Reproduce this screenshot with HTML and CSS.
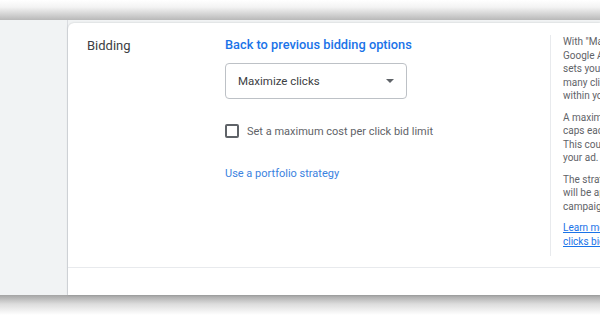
FILE: index.html
```html
<!DOCTYPE html>
<html lang="en">
<head>
    <meta charset="UTF-8">
    <title>Bidding</title>
    <link rel="stylesheet" href="styles.css">
</head>
<body>
    <div class="shade-top"></div>

    <div class="frame">
        <aside class="side"></aside>

        <main class="main">
            <div class="card">
                <section class="bidding">
                    <h2 class="label">Bidding</h2>

                    <div class="options">
                        <a href="#" class="back-link">Back to previous bidding options</a>

                        <div class="select">
                            <span>Maximize clicks</span>
                            <span class="caret"></span>
                        </div>

                        <label class="check">
                            <span class="box"></span>
                            Set a maximum cost per click bid limit
                        </label>

                        <a href="#" class="link">Use a portfolio strategy</a>
                    </div>

                    <div class="help">
                        <p>With "Maximize clicks,"<br>Google Ads automatically<br>sets your bids to get as<br>many clicks as possible<br>within your budget.</p>
                        <p>A maximum bid limit<br>caps each bid's cost.<br>This could limit clicks on<br>your ad.</p>
                        <p>The strategy you select<br>will be applied to this<br>campaign.</p>
                        <p><a href="#">Learn more about Maximize<br>clicks bidding</a></p>
                    </div>
                </section>
            </div>
        </main>
    </div>

    <div class="shade-bottom"></div>
</body>
</html>
```

FILE: styles.css
```css
* {
    margin: 0;
    padding: 0;
    box-sizing: border-box;
}

body {
    background: #fff;
    font-family: Roboto, "Liberation Sans", sans-serif;
    color: #3c4043;
    overflow: hidden;
}

a {
    text-decoration: none;
    color: #1a73e8;
}

.shade-top {
    height: 20px;
    background: linear-gradient(#fff 0%, #f4f4f4 35%, #b9b9b9 100%);
}

.shade-bottom {
    height: 20px;
    background: linear-gradient(#a4a4a4 0%, #dcdcdc 45%, #fff 100%);
}

.frame {
    display: flex;
    height: 275px;
    background: #f1f3f4;
}

.side {
    flex: 0 0 68px;
    border-right: 1px solid #dadce0;
}

.main {
    flex: 1;
    min-width: 0;
    padding-top: 3px;
    display: flex;
}

.card {
    flex: 1;
    min-width: 0;
    background: #fff;
    border-radius: 6px 0 0 0;
    box-shadow: 0 0 2px rgba(60, 64, 67, 0.25);
    display: flex;
    flex-direction: column;
}

.bidding {
    display: flex;
    height: 245px;
    padding: 13px 0 0 19px;
    border-bottom: 1px solid #e8eaed;
}

.label {
    flex: 0 0 138px;
    font-size: 13px;
    font-weight: 400;
    line-height: 18px;
    margin-top: 1px;
}

.options {
    flex: 0 0 325px;
    display: flex;
    flex-direction: column;
    align-items: flex-start;
}

.back-link {
    font-size: 12.8px;
    font-weight: 500;
    line-height: 18px;
}

.select {
    width: 182px;
    height: 36px;
    margin-top: 9px;
    border: 1px solid #bdc1c6;
    border-radius: 4px;
    display: flex;
    align-items: center;
    justify-content: space-between;
    padding: 0 12px;
    font-size: 11.5px;
    color: #3c4043;
}

.caret {
    width: 0;
    height: 0;
    border-left: 4px solid transparent;
    border-right: 4px solid transparent;
    border-top: 4px solid #5f6368;
}

.check {
    margin-top: 25px;
    display: flex;
    align-items: center;
    gap: 8px;
    font-size: 11px;
    color: #5f6368;
}

.box {
    width: 14px;
    height: 14px;
    border: 2px solid #5f6368;
    border-radius: 2px;
}

.link {
    margin-top: 29px;
    font-size: 11px;
    color: #3b82e0;
}

.help {
    flex: 1;
    min-width: 0;
    height: 221px;
    margin-top: -1px;
    border-left: 1px solid #e8eaed;
    padding-left: 12px;
    overflow: hidden;
    white-space: nowrap;
    font-size: 10px;
    line-height: 13.5px;
    color: #5f6368;
}

.help p {
    margin-bottom: 8px;
}

.help a {
    text-decoration: underline;
}
```
